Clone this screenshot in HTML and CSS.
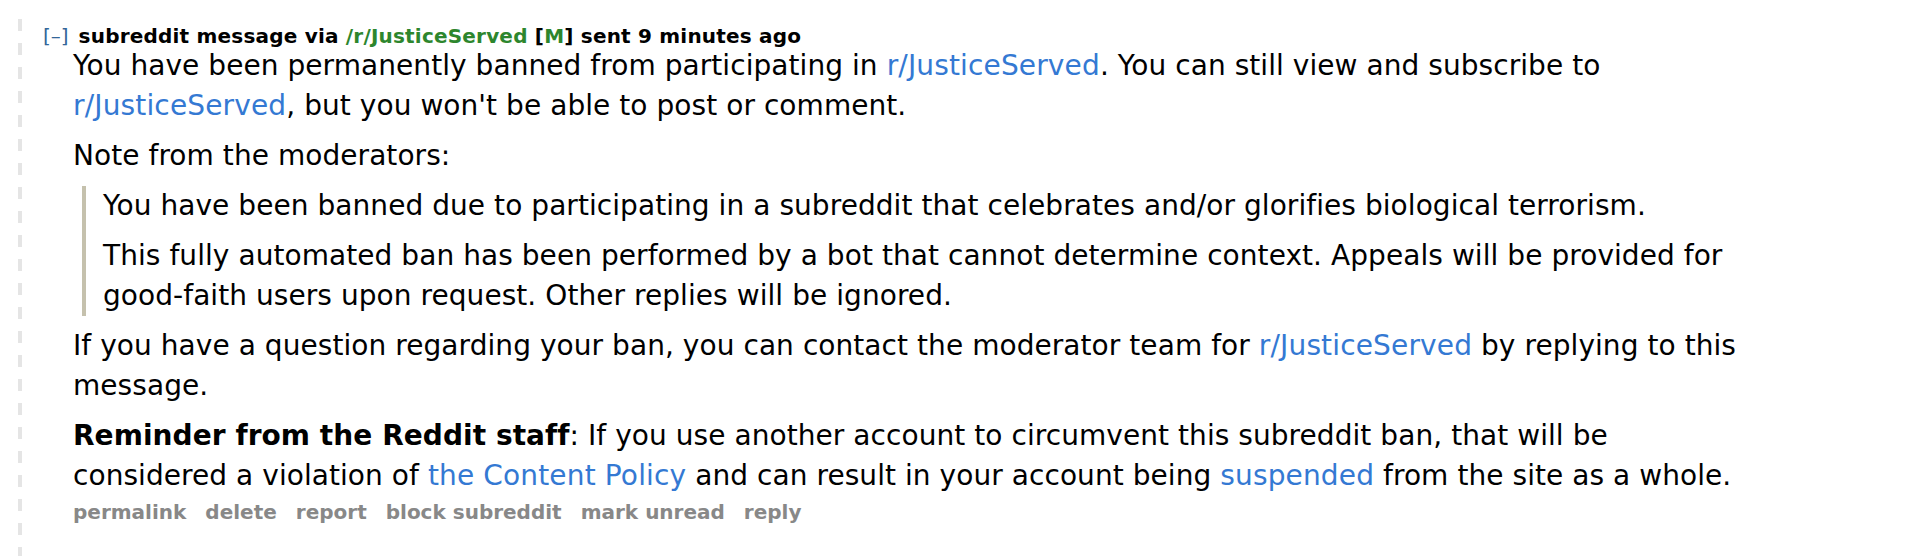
FILE: index.html
```html
<!DOCTYPE html>
<html>
<head>
  <title>Messages</title>
  <link rel="stylesheet" href="styles.css">
</head>
<body>
  <div class="thread">
    <div class="message">
      <p class="tagline">
        <a class="expand" href="#">[–]</a>
        <span class="subject">subreddit message via <a class="sr" href="#">/r/JusticeServed</a> <span class="mod">[<a href="#">M</a>]</span> sent 9 minutes ago</span>
      </p>
      <div class="md">
        <p>You have been permanently banned from participating in <a href="#">r/JusticeServed</a>. You can still view and subscribe to <a href="#">r/JusticeServed</a>, but you won't be able to post or comment.</p>
        <p>Note from the moderators:</p>
        <blockquote>
          <p>You have been banned due to participating in a subreddit that celebrates and/or glorifies biological terrorism.</p>
          <p>This fully automated ban has been performed by a bot that cannot determine context. Appeals will be provided for good-faith users upon request. Other replies will be ignored.</p>
        </blockquote>
        <p>If you have a question regarding your ban, you can contact the moderator team for <a href="#">r/JusticeServed</a> by replying to this message.</p>
        <p><strong>Reminder from the Reddit staff</strong>: If you use another account to circumvent this subreddit ban, that will be<br>considered a violation of <a href="#">the Content Policy</a> and can result in your account being <a href="#">suspended</a> from the site as a whole.</p>
      </div>
      <ul class="flat-list">
        <li><a href="#">permalink</a></li>
        <li><a href="#">delete</a></li>
        <li><a href="#">report</a></li>
        <li><a href="#">block subreddit</a></li>
        <li><a href="#">mark unread</a></li>
        <li><a href="#">reply</a></li>
      </ul>
    </div>
  </div>
</body>
</html>
```

FILE: styles.css
```css
body {
  margin: 0;
  font-family: "DejaVu Sans", Verdana, sans-serif;
  color: #000;
  background-color: #fff;
}
a {
  text-decoration: none;
}
.thread {
  margin: 19px 0 0 18px;
  padding: 7px 0 34px 25px;
  background: repeating-linear-gradient(to bottom, #e5e5e5 0 12px, transparent 12px 24px) left top / 4px 100% no-repeat;
}
.tagline {
  margin: 0;
  font-size: 20px;
  line-height: 20px;
  display: flex;
  gap: 10px;
}
.expand {
  color: #369;
  font-weight: normal;
}
.subject {
  font-weight: bold;
  letter-spacing: 0.2px;
}
.sr, .mod a {
  color: #2d862d;
}
.md {
  margin-left: 30px;
  max-width: 1680px;
  font-size: 28px;
  line-height: 40px;
  letter-spacing: 0.06px;
}
.md p {
  margin: 0 0 10px;
}
.md a {
  color: #3479d3;
  letter-spacing: 0.15px;
}
.md blockquote {
  margin: 0 0 10px 9px;
  padding-left: 17px;
  border-left: 4px solid #c5c1ad;
}
.flat-list {
  list-style: none;
  margin: -4px 0 0 30px;
  padding: 0;
  display: flex;
  gap: 19px;
  font-size: 20px;
  line-height: 20px;
  font-weight: bold;
}
.flat-list a {
  color: #888;
}
```
